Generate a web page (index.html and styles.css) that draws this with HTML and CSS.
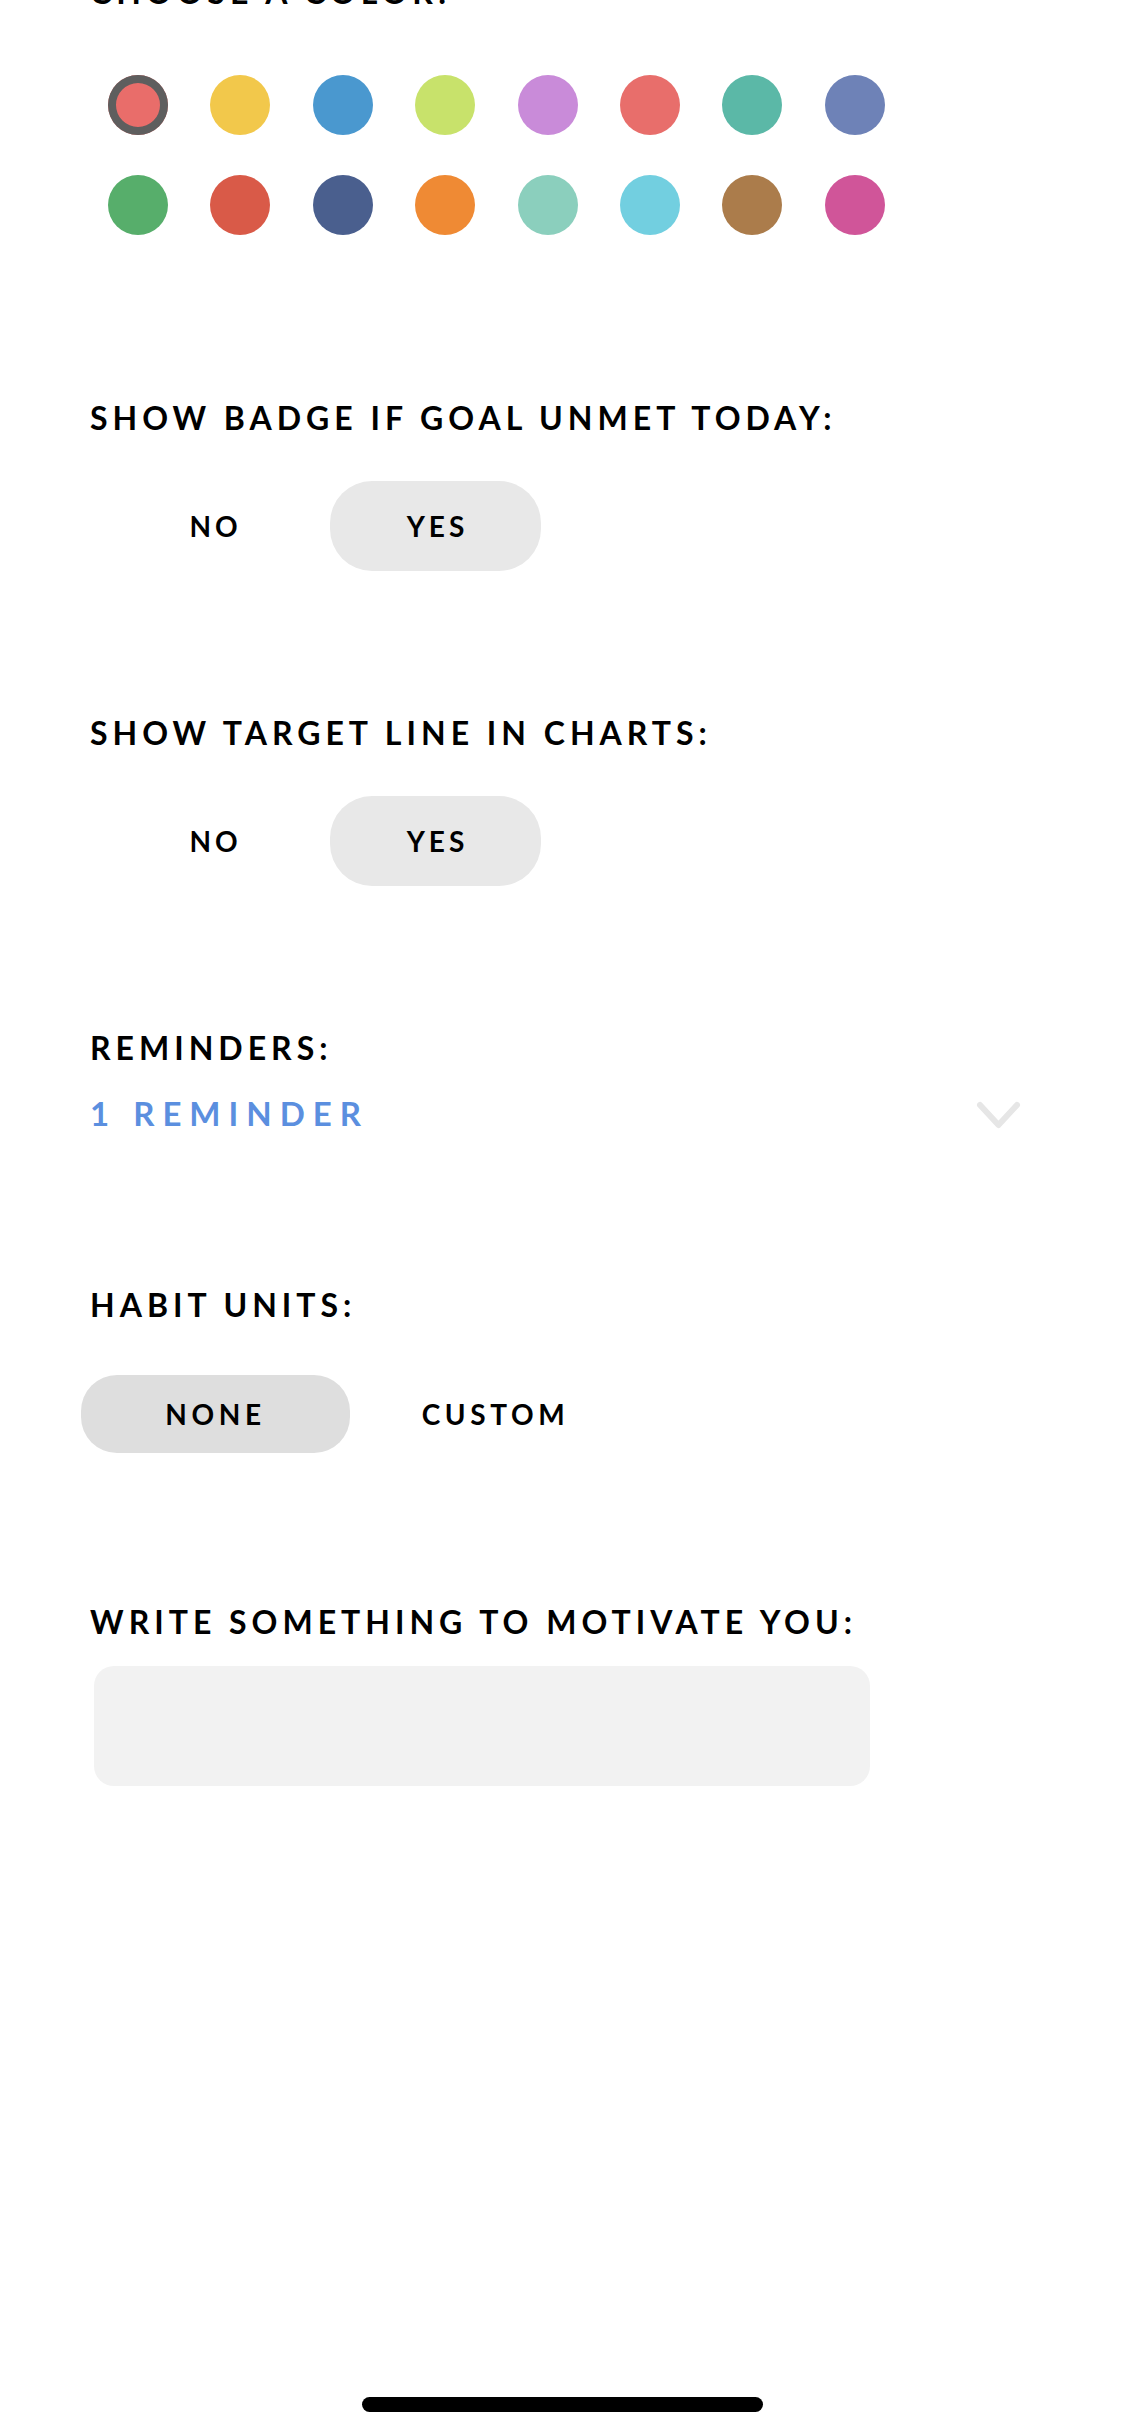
FILE: index.html
```html
<!DOCTYPE html>
<html>
<head>
<meta charset="utf-8">
<link rel="stylesheet" href="styles.css">
</head>
<body>
<div class="page">
  <div class="label label-top">CHOOSE A COLOR:</div>
  <div class="swatches">
    <span class="dot selected" style="background:#e96d6a"></span>
    <span class="dot" style="background:#f2c84b"></span>
    <span class="dot" style="background:#4a98cf"></span>
    <span class="dot" style="background:#c8e26b"></span>
    <span class="dot" style="background:#c98bd9"></span>
    <span class="dot" style="background:#e86e6b"></span>
    <span class="dot" style="background:#5bb8a7"></span>
    <span class="dot" style="background:#6e82b7"></span>
    <span class="dot" style="background:#57ae6b"></span>
    <span class="dot" style="background:#d95a48"></span>
    <span class="dot" style="background:#4a5f8e"></span>
    <span class="dot" style="background:#ef8a34"></span>
    <span class="dot" style="background:#8bcfbd"></span>
    <span class="dot" style="background:#72cfe0"></span>
    <span class="dot" style="background:#ab7c4b"></span>
    <span class="dot" style="background:#d05599"></span>
  </div>

  <div class="label label-badge">SHOW BADGE IF GOAL UNMET TODAY:</div>
  <div class="toggle">
    <span class="opt">NO</span>
    <span class="opt active">YES</span>
  </div>

  <div class="label label-next">SHOW TARGET LINE IN CHARTS:</div>
  <div class="toggle">
    <span class="opt">NO</span>
    <span class="opt active">YES</span>
  </div>

  <div class="label label-next">REMINDERS:</div>
  <div class="reminder-row">
    <span class="reminder">1 REMINDER</span>
    <svg class="chev" width="45" height="28" viewBox="0 0 45 28"><path d="M4 4 L22.5 24 L41 4" fill="none" stroke="#e6e6e6" stroke-width="6" stroke-linecap="round" stroke-linejoin="round"/></svg>
  </div>

  <div class="label label-units">HABIT UNITS:</div>
  <div class="units">
    <span class="uopt active">NONE</span>
    <span class="uopt">CUSTOM</span>
  </div>

  <div class="label label-write">WRITE SOMETHING TO MOTIVATE YOU:</div>
  <div class="motivate"></div>
</div>
<div class="home-indicator"></div>
</body>
</html>
```
FILE: styles.css
```css
html, body {
  margin: 0;
  padding: 0;
  background: #ffffff;
}
body {
  width: 1125px;
  height: 2436px;
  overflow: hidden;
  position: relative;
  font-family: "Lato", "Noto Sans", sans-serif;
  color: #000;
}
.page {
  padding-left: 90px;
}
.label {
  font-size: 32px;
  line-height: 32px;
  height: 32px;
  font-weight: 700;
  letter-spacing: 5px;
  white-space: nowrap;
}
.label-top {
  margin-top: -24px;
}
.swatches {
  margin-top: 67px;
  margin-left: 18px;
  display: grid;
  grid-template-columns: repeat(8, 60px);
  column-gap: 42.4px;
  row-gap: 40px;
}
.dot {
  width: 60px;
  height: 60px;
  border-radius: 50%;
  display: block;
}
.dot.selected {
  box-shadow: inset 0 0 0 8px #5e5e5e;
}
.label-badge {
  margin-top: 167px;
}
.label-next {
  margin-top: 146px;
}
.toggle {
  margin-top: 47px;
  margin-left: 18px;
  display: flex;
  gap: 11px;
}
.opt {
  width: 211px;
  height: 90px;
  border-radius: 42px;
  display: flex;
  align-items: center;
  justify-content: center;
  font-size: 28px;
  font-weight: 700;
  letter-spacing: 4px;
  text-indent: 4px;
}
.opt.active {
  background: #e8e8e8;
}
.reminder-row {
  margin-top: 33px;
  display: flex;
  align-items: center;
  justify-content: space-between;
  width: 931px;
  height: 32px;
}
.reminder {
  font-size: 33px;
  line-height: 32px;
  font-weight: 700;
  letter-spacing: 8px;
  color: #5b8fdf;
}
.chev {
  display: block;
  margin-top: 4px;
}
.label-units {
  margin-top: 160px;
}
.units {
  margin-top: 54px;
  margin-left: -9px;
  display: flex;
  gap: 11px;
}
.uopt {
  width: 269px;
  height: 78px;
  border-radius: 36px;
  display: flex;
  align-items: center;
  justify-content: center;
  font-size: 28px;
  font-weight: 700;
  letter-spacing: 4.6px;
}
.uopt.active {
  background: #dedede;
}
.label-write {
  margin-top: 153px;
}
.motivate {
  margin-top: 28px;
  margin-left: 4px;
  width: 776px;
  height: 120px;
  border-radius: 20px;
  background: #f2f2f2;
}
.home-indicator {
  position: absolute;
  left: 362px;
  top: 2397px;
  width: 401px;
  height: 15px;
  border-radius: 8px;
  background: #000;
}
```
